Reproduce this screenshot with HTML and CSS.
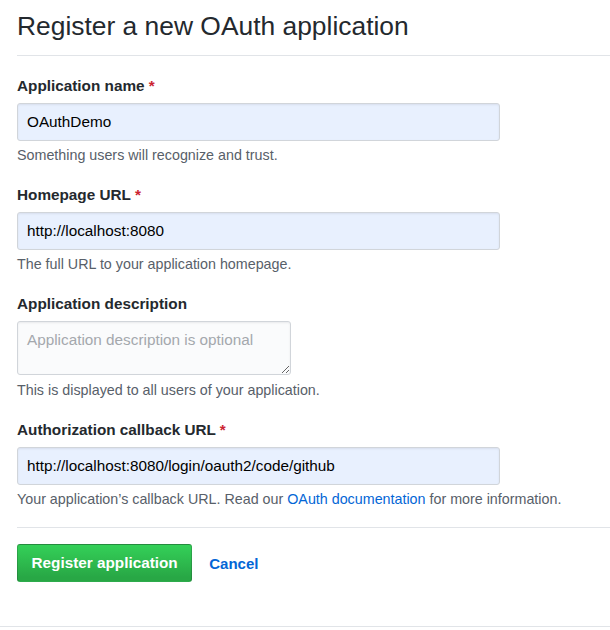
FILE: index.html
```html
<!DOCTYPE html>
<html lang="en">
<head>
<meta charset="utf-8">
<title>Register a new OAuth application</title>
<link rel="stylesheet" href="styles.css">
</head>
<body>
<div class="page">
  <h1 class="title">Register a new OAuth application</h1>
  <form class="form">
    <div class="group">
      <label class="label">Application name <span class="req">*</span></label>
      <input class="field" type="text" value="OAuthDemo">
      <p class="note">Something users will recognize and trust.</p>
    </div>
    <div class="group">
      <label class="label">Homepage URL <span class="req">*</span></label>
      <input class="field" type="text" value="http://localhost:8080">
      <p class="note">The full URL to your application homepage.</p>
    </div>
    <div class="group">
      <label class="label">Application description</label>
      <textarea class="area" placeholder="Application description is optional"></textarea>
      <p class="note">This is displayed to all users of your application.</p>
    </div>
    <div class="group">
      <label class="label">Authorization callback URL <span class="req">*</span></label>
      <input class="field" type="text" value="http://localhost:8080/login/oauth2/code/github">
      <p class="note">Your application’s callback URL. Read our <a class="link" href="#">OAuth documentation</a> for more information.</p>
    </div>
    <div class="actions">
      <button class="btn" type="button">Register application</button>
      <a class="cancel" href="#">Cancel</a>
    </div>
  </form>
</div>
<div class="footer"></div>
</body>
</html>
```

FILE: styles.css
```css
* { box-sizing: border-box; }
html, body { margin: 0; padding: 0; background: #fff; }
body {
  font-family: "Liberation Sans", Arial, Helvetica, sans-serif;
  color: #24292e;
  width: 610px;
  height: 630px;
  overflow: hidden;
  position: relative;
}
.page { padding-left: 17px; }
.title {
  margin: 10px 0 0 0;
  font-size: 26.4px;
  line-height: 32px;
  font-weight: 400;
  padding-bottom: 13px;
  border-bottom: 1px solid #e1e4e8;
}
.form { padding-top: 20px; }
.group { display: flex; flex-direction: column; align-items: flex-start; margin-bottom: 20px; }
.label {
  font-size: 15.3px;
  line-height: 20px;
  font-weight: 700;
  margin-bottom: 7px;
}
.req { color: #cb2431; }
.field {
  width: 483px;
  height: 38px;
  margin: 0;
  padding: 8px 9px;
  border: 1px solid #d1d5da;
  border-radius: 3px;
  background: #e8f0fe;
  font-family: "Liberation Sans", Arial, sans-serif;
  font-size: 15.3px;
  line-height: 20px;
  color: #000;
  box-shadow: inset 0 1px 2px rgba(27,31,35,0.075);
}
.area {
  display: block;
  width: 274px;
  height: 54px;
  margin: 0;
  padding: 8px 9px;
  border: 1px solid #d1d5da;
  border-radius: 3px;
  background: #fafbfc;
  font-family: "Liberation Sans", Arial, sans-serif;
  font-size: 15.3px;
  line-height: 20px;
  color: #24292e;
  box-shadow: inset 0 1px 2px rgba(27,31,35,0.075);
}
.area::placeholder { color: #a4a8ad; }
.note {
  margin: 4px 0 0 0;
  font-size: 14.3px;
  line-height: 20px;
  color: #586069;
}
.group:nth-child(3) .note { margin-top: 5px; }
.link { color: #0366d6; text-decoration: none; }
.actions {
  margin-top: -2px;
  border-top: 1px solid #e1e4e8;
  padding-top: 16px;
  display: flex;
  align-items: center;
  gap: 17px;
}
.btn {
  height: 38px;
  padding: 0 13.5px;
  border: 1px solid rgba(27,31,35,0.2);
  border-radius: 3px;
  background: linear-gradient(#34d058, #28a745 90%);
  color: #fff;
  font-family: "Liberation Sans", Arial, sans-serif;
  font-size: 15.3px;
  font-weight: 700;
  line-height: 20px;
}
.cancel {
  color: #0366d6;
  font-size: 15px;
  font-weight: 700;
  text-decoration: none;
}
.footer {
  position: absolute;
  left: 0;
  top: 626px;
  width: 610px;
  border-top: 1px solid #e1e4e8;
}
```
